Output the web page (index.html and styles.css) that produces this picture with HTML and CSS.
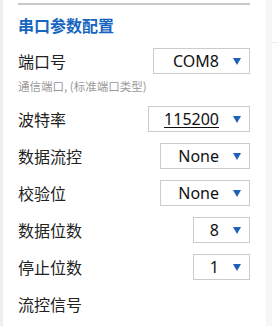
FILE: index.html
```html
<!DOCTYPE html>
<html>
  <head>
    <meta charset="utf-8" />
    <title>串口参数配置</title>
    <link rel="stylesheet" href="styles.css">
  </head>
  <body>
    <div id="shell">
      <div class="edge"></div>
      <div id="panel">
        <div class="rule"></div>
        <h2>串口参数配置</h2>
        <div class="row">
          <span class="label">端口号</span>
          <div class="picker w-port"><span class="value">COM8</span><span class="arrow"></span></div>
        </div>
        <div class="hint">通信端口, (标准端口类型)</div>
        <div class="row">
          <span class="label">波特率</span>
          <div class="picker w-baud"><span class="value link">115200</span><span class="arrow"></span></div>
        </div>
        <div class="row">
          <span class="label">数据流控</span>
          <div class="picker w-mid"><span class="value">None</span><span class="arrow"></span></div>
        </div>
        <div class="row">
          <span class="label">校验位</span>
          <div class="picker w-mid"><span class="value">None</span><span class="arrow"></span></div>
        </div>
        <div class="row">
          <span class="label">数据位数</span>
          <div class="picker w-small"><span class="value">8</span><span class="arrow"></span></div>
        </div>
        <div class="row">
          <span class="label">停止位数</span>
          <div class="picker w-small"><span class="value">1</span><span class="arrow"></span></div>
        </div>
        <div class="row">
          <span class="label">流控信号</span>
        </div>
      </div>
      <div class="gutter"></div>
      <div class="side"></div>
    </div>
  </body>
</html>
```

FILE: styles.css
```css
*{
  box-sizing: border-box;
  font-family: "Noto Sans", "Noto Sans CJK SC", sans-serif;
}
body{
  margin: 0;
  background-color: white;
}
#shell{
  display: flex;
  height: 326px;
  overflow: hidden;
}
.edge{
  width: 3px;
  background-color: #eceef1;
}
#panel{
  width: 263px;
  padding: 3px 16px 0 15px;
}
.gutter{
  width: 6px;
  background-color: #f6f6f6;
}
.side{
  flex: 1;
  margin-top: 42px;
  border-top: 1px solid #eeeeee;
}
.rule{
  height: 2px;
  background-color: #c9c9c9;
}
h2{
  margin: 10px 0 0 0;
  font-size: 16px;
  line-height: 22px;
  font-weight: bold;
  color: #1666c0;
}
.row{
  display: flex;
  justify-content: space-between;
  align-items: center;
  height: 26px;
  margin-top: 11px;
}
.label{
  font-size: 16px;
  color: #222222;
  font-family: "Noto Sans CJK SC", sans-serif;
}
.hint{
  font-size: 11.5px;
  line-height: 14px;
  margin-top: 5px;
  color: #9a9a9a;
  font-family: "Noto Sans CJK SC", sans-serif;
}
.hint + .row{
  margin-top: 13px;
}
.picker{
  height: 26px;
  border: 1px solid #cccccc;
  display: flex;
  align-items: center;
  justify-content: flex-end;
  padding-right: 8px;
}
.w-port{ width: 97px; }
.w-baud{ width: 102px; }
.w-mid{ width: 90px; }
.w-small{ width: 57px; }
.value{
  font-size: 16px;
  color: #111111;
  margin-right: 14px;
}
.link{
  text-decoration: underline;
  text-underline-offset: 2px;
}
.arrow{
  width: 0;
  height: 0;
  border-left: 4px solid transparent;
  border-right: 4px solid transparent;
  border-top: 7px solid #1c60b8;
}
```
